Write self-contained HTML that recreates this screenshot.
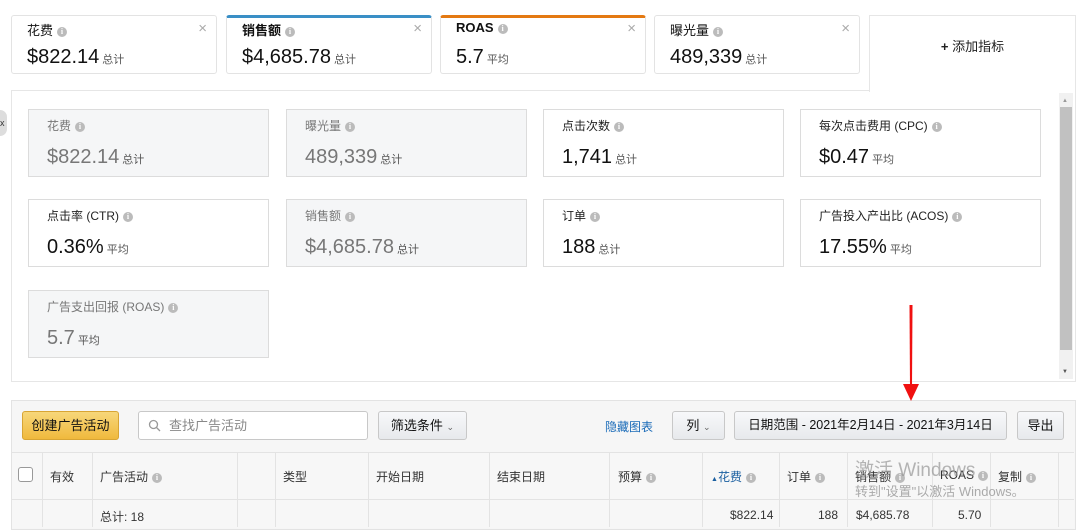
<!DOCTYPE html>
<html><head><meta charset="utf-8"><style>
*{box-sizing:border-box;margin:0;padding:0}
body{width:1080px;height:527px;overflow:hidden;background:#fff;font-family:"Liberation Sans","Noto Sans CJK SC",sans-serif;color:#111;position:relative}
.a{position:absolute}
.tc{position:absolute;top:15px;height:59px;width:206px;background:#fff;border:1px solid #e3e3e3;border-radius:3px}
.tc .t{position:absolute;left:15px;top:4px;font-size:13px;color:#111}
.tc .v{position:absolute;left:15px;top:30px;font-size:20px;color:#111}
.s{font-size:11px;color:#555;margin-left:3px}
.x{position:absolute;right:9px;top:4px;color:#aaa;font-size:15px}
.i{display:inline-block;width:10px;height:10px;border-radius:50%;background:#bbb;color:#fff;font-size:8px;line-height:10px;text-align:center;font-weight:bold;vertical-align:middle;margin-left:4px;font-family:"Liberation Serif",serif}
.mc{position:absolute;width:241px;height:68px;border:1px solid #dcdcdc;background:#fff}
.mc.g{background:#f5f6f7}
.mc .t{position:absolute;left:18px;top:7px;font-size:12px;color:#222}
.mc .v{position:absolute;left:18px;top:36px;font-size:20px;color:#111}
.mc.g .t,.mc.g .v{color:#777}
.btn{position:absolute;top:411px;height:29px;border:1px solid #c8c8c8;border-radius:3px;background:linear-gradient(#f7f8fa,#e7e9ec);font-size:13px;color:#111;line-height:27px;text-align:center}
.vl{position:absolute;top:452px;height:75px;width:1px;background:#e3e3e3}
.h{position:absolute;top:468px;font-size:12px;color:#333}
.r{position:absolute;top:508px;font-size:12px;color:#333}
</style></head><body>
<div class="tc" style="left:11px"><div class="t">花费<span class="i">i</span></div><div class="x">×</div><div class="v">$822.14<span class="s">总计</span></div></div>
<div class="tc" style="left:226px;border-top:3px solid #3a8fc6"><div class="t" style="top:2px;font-weight:bold">销售额<span class="i">i</span></div><div class="x" style="top:2px">×</div><div class="v" style="top:28px">$4,685.78<span class="s">总计</span></div></div>
<div class="tc" style="left:440px;border-top:3px solid #e47911"><div class="t" style="top:2px;font-weight:bold">ROAS<span class="i">i</span></div><div class="x" style="top:2px">×</div><div class="v" style="top:28px">5.7<span class="s">平均</span></div></div>
<div class="tc" style="left:654px"><div class="t">曝光量<span class="i">i</span></div><div class="x">×</div><div class="v">489,339<span class="s">总计</span></div></div>
<div class="a" style="left:11px;top:90px;width:1065px;height:292px;border:1px solid #e6e6e6;background:#fff"></div>
<div class="a" style="left:869px;top:15px;width:207px;height:77px;border:1px solid #e6e6e6;border-bottom:none;background:#fff;font-size:13px;text-align:center;padding-top:20px;color:#222"><b>+</b> 添加指标</div>
<div class="a" style="left:0;top:110px;width:7px;height:26px;background:#ddd;border-radius:0 8px 8px 0;font-size:9px;line-height:26px;color:#333;overflow:hidden">x</div>
<div class="a" style="left:1059px;top:93px;width:14px;height:286px;background:#f1f1f1"></div>
<div class="a" style="left:1060px;top:107px;width:12px;height:243px;background:#c1c1c1"></div>
<div class="a" style="left:1062px;top:98px;font-size:6px;color:#999">▲</div>
<div class="a" style="left:1062px;top:369px;font-size:6px;color:#555">▼</div>

<div class="mc g" style="left:28px;top:109px"><div class="t">花费<span class="i">i</span></div><div class="v">$822.14<span class="s">总计</span></div></div>
<div class="mc g" style="left:286px;top:109px"><div class="t">曝光量<span class="i">i</span></div><div class="v">489,339<span class="s">总计</span></div></div>
<div class="mc" style="left:543px;top:109px"><div class="t">点击次数<span class="i">i</span></div><div class="v">1,741<span class="s">总计</span></div></div>
<div class="mc" style="left:800px;top:109px"><div class="t">每次点击费用 (CPC)<span class="i">i</span></div><div class="v">$0.47<span class="s">平均</span></div></div>
<div class="mc" style="left:28px;top:199px"><div class="t">点击率 (CTR)<span class="i">i</span></div><div class="v">0.36%<span class="s">平均</span></div></div>
<div class="mc g" style="left:286px;top:199px"><div class="t">销售额<span class="i">i</span></div><div class="v">$4,685.78<span class="s">总计</span></div></div>
<div class="mc" style="left:543px;top:199px"><div class="t">订单<span class="i">i</span></div><div class="v">188<span class="s">总计</span></div></div>
<div class="mc" style="left:800px;top:199px"><div class="t">广告投入产出比 (ACOS)<span class="i">i</span></div><div class="v">17.55%<span class="s">平均</span></div></div>
<div class="mc g" style="left:28px;top:290px"><div class="t">广告支出回报 (ROAS)<span class="i">i</span></div><div class="v">5.7<span class="s">平均</span></div></div>

<div class="a" style="left:11px;top:400px;width:1065px;height:130px;border:1px solid #e3e3e3;background:#f6f6f6"></div>
<div class="a" style="left:12px;top:452px;width:1062px;height:76px;background:#f7f7f7;border-top:1px solid #e3e3e3"></div>
<div class="a" style="left:12px;top:499px;width:1062px;height:1px;background:#e3e3e3"></div>
<div class="btn" style="left:22px;width:97px;background:linear-gradient(#f7d77a,#f0b93d);border-color:#d8a534">创建广告活动</div>
<div class="a" style="left:138px;top:411px;width:230px;height:29px;background:#fff;border:1px solid #c8c8c8;border-radius:3px;font-size:13px;color:#888;line-height:27px;padding-left:30px">查找广告活动</div>
<svg class="a" style="left:148px;top:419px" width="13" height="13"><circle cx="5.5" cy="5.5" r="4" fill="none" stroke="#999" stroke-width="1.3"/><path d="M8.5 8.5L12 12" stroke="#999" stroke-width="1.3"/></svg>
<div class="btn" style="left:378px;width:89px">筛选条件 <span style="font-size:9px;color:#666">⌄</span></div>
<div class="a" style="left:605px;top:418px;font-size:12px;color:#1a6bb8">隐藏图表</div>
<div class="btn" style="left:672px;width:53px">列 <span style="font-size:9px;color:#666">⌄</span></div>
<div class="btn" style="left:734px;width:273px;font-size:12.5px">日期范围 - 2021年2月14日 - 2021年3月14日</div>
<div class="btn" style="left:1017px;width:47px">导出</div>

<div class="vl" style="left:42px"></div><div class="vl" style="left:92px"></div><div class="vl" style="left:237px"></div><div class="vl" style="left:275px"></div><div class="vl" style="left:368px"></div><div class="vl" style="left:489px"></div><div class="vl" style="left:609px"></div><div class="vl" style="left:702px"></div><div class="vl" style="left:779px"></div><div class="vl" style="left:847px"></div><div class="vl" style="left:932px"></div><div class="vl" style="left:990px"></div><div class="vl" style="left:1058px"></div>
<div class="a" style="left:18px;top:467px;width:15px;height:15px;border:1px solid #999;border-radius:3px;background:#fff"></div>
<div class="h" style="left:50px">有效</div>
<div class="h" style="left:100px">广告活动<span class="i">i</span></div>
<div class="h" style="left:283px">类型</div>
<div class="h" style="left:376px">开始日期</div>
<div class="h" style="left:497px">结束日期</div>
<div class="h" style="left:618px">预算<span class="i">i</span></div>
<div class="h" style="left:711px;color:#1a5fa0"><span style="font-size:7px">▲</span>花费<span class="i">i</span></div>
<div class="h" style="left:787px">订单<span class="i">i</span></div>
<div class="h" style="left:855px">销售额<span class="i">i</span></div>
<div class="h" style="left:940px">ROAS<span class="i">i</span></div>
<div class="h" style="left:998px">复制<span class="i">i</span></div>
<div class="r" style="left:100px">总计: 18</div>
<div class="r" style="left:730px">$822.14</div>
<div class="r" style="left:818px">188</div>
<div class="r" style="left:856px">$4,685.78</div>
<div class="r" style="left:958px">5.70</div>
<div class="a" style="left:855px;top:455px;font-size:19px;color:rgba(150,150,150,.7)">激活 Windows</div>
<div class="a" style="left:855px;top:481px;font-size:13px;color:rgba(150,150,150,.8)">转到"设置"以激活 Windows。</div>
<svg class="a" style="left:900px;top:302px" width="22" height="100"><path d="M9.5 3L12.5 3L12 86L10 86Z" fill="#f01010"/><path d="M3 82L19 82L11 99Z" fill="#f01010"/></svg>
</body></html>
